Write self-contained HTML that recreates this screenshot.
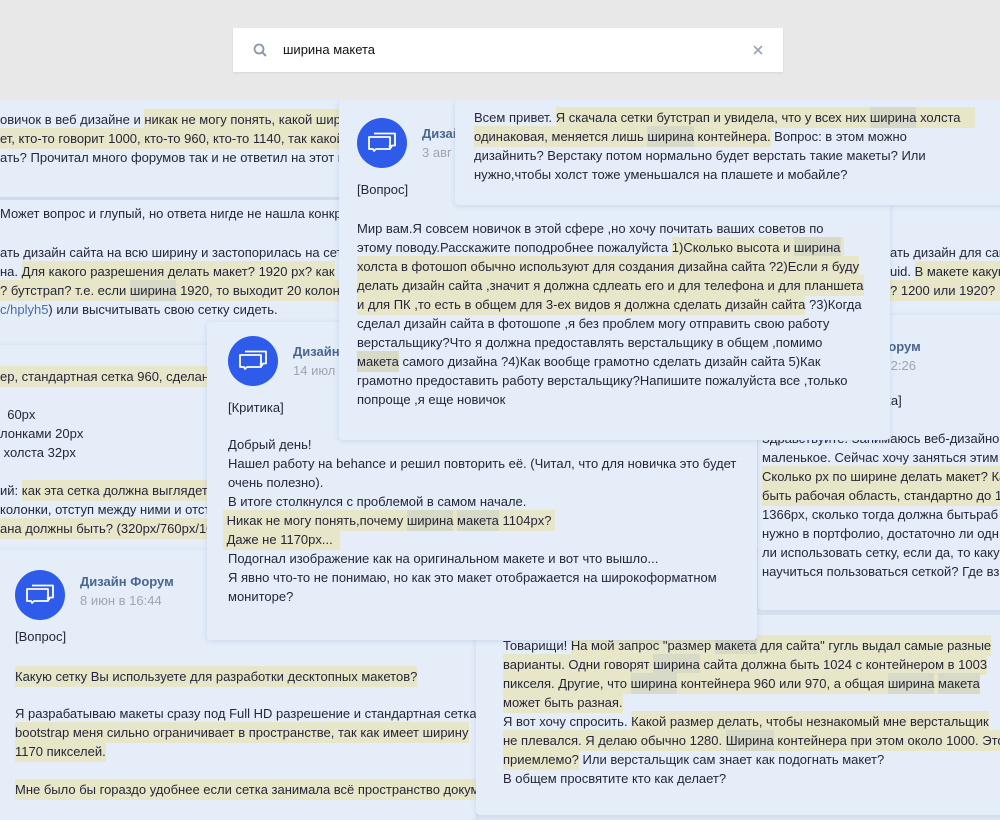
<!DOCTYPE html>
<html><head><meta charset="utf-8">
<style>
*{margin:0;padding:0;box-sizing:border-box}
body{width:1000px;height:801px;overflow:hidden;background:#e0e8f4;font-family:"Liberation Sans",sans-serif;font-size:13px;color:#26263a;position:relative}
.top{position:absolute;left:0;top:0;width:1000px;height:100px;background:#e8e8e8;z-index:50}
.search{position:absolute;left:233px;top:28px;width:550px;height:44px;background:#fff;box-shadow:0 1px 2px rgba(0,0,0,.08)}
.search .q{position:absolute;left:50px;top:14px;font-size:13px;color:#111}
.c{position:absolute;background:#e4edf8;border-radius:4px;box-shadow:0 1px 6px rgba(70,100,170,.16);overflow:hidden}
.l{position:absolute;white-space:nowrap;height:19px;line-height:19px}
.h{background:#e7e6c9;padding:3px 0}
.k{background:#d7dac6;padding:3px 0}
.a{position:absolute;width:50px;height:50px;border-radius:50%;background:#2f5bea}
.n{position:absolute;white-space:nowrap;color:#4a6690;font-weight:bold;font-size:13px}
.d{position:absolute;white-space:nowrap;color:#a0a6b0;font-size:13px}
.lk{color:#4a6fa5}
</style></head><body>
<svg width="0" height="0" style="position:absolute"><defs><symbol id="ic" viewBox="0 0 50 50"><path d="M12 19h21v12H19l-2 2-1-2h-4z" fill="none" stroke="#fff" stroke-width="1.8" stroke-linejoin="round"/><path d="M17 15.5h21v12h-3l-1 2-2-2" fill="none" stroke="#fff" stroke-width="1.8" stroke-linejoin="round"/></symbol></defs></svg>
<div class="top"><div class="search">
<svg style="position:absolute;left:20px;top:15px" width="14" height="14" viewBox="0 0 14 14"><circle cx="6" cy="6" r="4.5" fill="none" stroke="#8a96a8" stroke-width="1.8"/><line x1="9.3" y1="9.3" x2="13" y2="13" stroke="#8a96a8" stroke-width="2"/></svg>
<div class="q">ширина макета</div>
<svg style="position:absolute;left:520px;top:17px" width="10" height="10" viewBox="0 0 10 10"><path d="M1 1L9 9M9 1L1 9" stroke="#9aa4b2" stroke-width="1.6"/></svg>
</div></div>

<div class="c" style="left:-10px;top:100px;width:1010px;height:97px;z-index:1">
<div class="l" style="left:10px;top:10px">овичок в веб дизайне и <span class="h">никак не могу понять, какой ширины делать макет</span></div>
<div class="l" style="left:10px;top:29px"><span class="h">ет, кто-то говорит 1000, кто-то 960, кто-то 1140, так какой</span></div>
<div class="l" style="left:10px;top:48px">ать? Прочитал много форумов так и не ответил на этот вопрос</div>
</div>

<div class="c" style="left:-10px;top:200px;width:1010px;height:145px;z-index:2">
<div class="l" style="left:10px;top:4px"> Может вопрос и глупый, но ответа нигде не нашла конкретного</div>
<div class="l" style="left:10px;top:43px">ать дизайн сайта на всю ширину и застопорилась на сетке</div>
<div class="l" style="left:10px;top:62px">на. <span class="h">Для какого разрешения делать макет? 1920 px? как</span></div>
<div class="l" style="left:10px;top:81px"><span class="h">? бутстрап? т.е. если <span class="k">ширина</span> 1920, то выходит 20 колонок</span></div>
<div class="l" style="left:10px;top:100px"><span class="lk">c/hplyh5</span>) или высчитывать свою сетку сидеть.</div>
<div class="l" style="left:900px;top:43px">ать дизайн для сайта</div>
<div class="l" style="left:900px;top:62px">uid. <span class="h">В макете какую</span></div>
<div class="l" style="left:900px;top:81px"><span class="h">? 1200 или 1920?&nbsp;&nbsp;&nbsp;</span></div>
</div>

<div class="c" style="left:-10px;top:345px;width:800px;height:205px;z-index:3">
<div class="l" style="left:10px;top:22px"><span class="h">ер, стандартная сетка 960, сделана</span></div>
<div class="l" style="left:10px;top:60px">&nbsp; 60px</div>
<div class="l" style="left:10px;top:79px">лонками 20px</div>
<div class="l" style="left:10px;top:98px">&nbsp;холста 32px</div>
<div class="l" style="left:10px;top:136px">ий: <span class="h">как эта сетка должна выглядеть</span></div>
<div class="l" style="left:10px;top:155px">колонки, отступ между ними и отступ</div>
<div class="l" style="left:10px;top:174px"><span class="h">ана должны быть? (320px/760px/1024px)</span></div>
</div>

<div class="c" style="left:758px;top:315px;width:260px;height:295px;z-index:4">
<div class="a" style="left:4px;top:20px"><svg width="50" height="50"><use href="#ic"/></svg></div>
<div class="n" style="left:69px;top:24px">Дизайн Форум</div>
<div class="d" style="left:69px;top:43px">16 июн в 12:26</div>
<div class="l" style="left:88px;top:76px">[Критика]</div>
<div class="l" style="left:4px;top:114px">Здравствуйте. Занимаюсь веб-дизайном</div>
<div class="l" style="left:4px;top:133px">маленькое. Сейчас хочу заняться этим</div>
<div class="l" style="left:4px;top:152px"><span class="h">Сколько px по ширине делать макет? Ка</span></div>
<div class="l" style="left:4px;top:171px"><span class="h">быть рабочая область, стандартно до 1</span></div>
<div class="l" style="left:4px;top:190px">1366px, сколько тогда должна бытьраб</div>
<div class="l" style="left:4px;top:209px">нужно в портфолио, достаточно ли одн</div>
<div class="l" style="left:4px;top:228px">ли использовать сетку, если да, то каку</div>
<div class="l" style="left:4px;top:247px">научиться пользоваться сеткой? Где вз</div>
</div>

<div class="c" style="left:-10px;top:550px;width:486px;height:270px;z-index:5">
<div class="a" style="left:25px;top:20px"><svg width="50" height="50"><use href="#ic"/></svg></div>
<div class="n" style="left:90px;top:24px">Дизайн Форум</div>
<div class="d" style="left:90px;top:43px">8 июн в 16:44</div>
<div class="l" style="left:25px;top:77px">[Вопрос]</div>
<div class="l" style="left:25px;top:117px"><span class="h">Какую сетку Вы используете для разработки десктопных макетов?</span></div>
<div class="l" style="left:25px;top:154px">Я разрабатываю макеты сразу под Full HD разрешение и стандартная сетка</div>
<div class="l" style="left:25px;top:173px"><span class="h">bootstrap меня сильно ограничивает в пространстве, так как имеет ширину</span></div>
<div class="l" style="left:25px;top:192px"><span class="h">1170 пикселей. </span></div>
<div class="l" style="left:25px;top:230px"><span class="h">Мне было бы гораздо удобнее если сетка занимала всё пространство документа</span></div>
</div>

<div class="c" style="left:476px;top:615px;width:540px;height:200px;z-index:6">
<div class="l" style="left:27px;top:21px">Товарищи! <span class="h">На мой запрос "размер <span class="k">макета</span> для сайта" гугль выдал самые разные</span></div>
<div class="l" style="left:27px;top:40px"><span class="h">варианты. Одни говорят <span class="k">ширина</span> сайта должна быть 1024 с контейнером в 1003</span></div>
<div class="l" style="left:27px;top:59px"><span class="h">пикселя. Другие, что <span class="k">ширина</span> контейнера 960 или 970, а общая <span class="k">ширина</span> <span class="k">макета</span></span></div>
<div class="l" style="left:27px;top:78px"><span class="h">может быть разная.</span></div>
<div class="l" style="left:27px;top:97px">Я вот хочу спросить. <span class="h">Какой размер делать, чтобы незнакомый мне верстальщик</span></div>
<div class="l" style="left:27px;top:116px"><span class="h">не плевался. Я делаю обычно 1280. <span class="k">Ширина</span> контейнера при этом около 1000. Это</span></div>
<div class="l" style="left:27px;top:135px"><span class="h">приемлемо?</span> Или верстальщик сам знает как подогнать макет?</div>
<div class="l" style="left:27px;top:154px">В общем просвятите кто как делает?</div>
</div>

<div class="c" style="left:207px;top:322px;width:550px;height:318px;z-index:7">
<div class="a" style="left:21px;top:14px"><svg width="50" height="50"><use href="#ic"/></svg></div>
<div class="n" style="left:86px;top:22px">Дизайн Форум</div>
<div class="d" style="left:86px;top:41px">14 июл в 11:20</div>
<div class="l" style="left:21px;top:76px">[Критика]</div>
<div class="l" style="left:21px;top:113px">Добрый день!</div>
<div class="l" style="left:21px;top:132px">Нашел работу на behance и решил повторить её. (Читал, что для новичка это будет</div>
<div class="l" style="left:21px;top:151px">очень полезно).</div>
<div class="l" style="left:21px;top:170px">В итоге столкнулся с проблемой в самом начале.</div>
<div class="l" style="left:16px;top:189px"><span class="h">&nbsp;Никак не могу понять,почему <span class="k">ширина</span> <span class="k">макета</span> 1104px?&nbsp;</span></div>
<div class="l" style="left:16px;top:208px"><span class="h">&nbsp;Даже не 1170px...&nbsp;&nbsp;</span></div>
<div class="l" style="left:21px;top:227px">Подогнал изображение как на оригинальном макете и вот что вышло...</div>
<div class="l" style="left:21px;top:246px">Я явно что-то не понимаю, но как это макет отображается на широкоформатном</div>
<div class="l" style="left:21px;top:265px">мониторе?</div>
</div>

<div class="c" style="left:339px;top:100px;width:551px;height:340px;z-index:8">
<div class="a" style="left:18px;top:18px"><svg width="50" height="50"><use href="#ic"/></svg></div>
<div class="n" style="left:83px;top:26px">Дизайн Форум</div>
<div class="d" style="left:83px;top:45px">3 авг в 9:41</div>
<div class="l" style="left:18px;top:80px">[Вопрос]</div>
<div class="l" style="left:18px;top:119px">Мир вам.Я совсем новичок в этой сфере ,но хочу почитать ваших советов по</div>
<div class="l" style="left:18px;top:138px">этому поводу.Расскажите поподробнее пожалуйста <span class="h">1)Сколько высота и <span class="k">ширина</span>&nbsp;</span></div>
<div class="l" style="left:18px;top:157px"><span class="h">холста в фотошоп обычно используют для создания дизайна сайта ?2)Если я буду</span></div>
<div class="l" style="left:18px;top:176px"><span class="h">делать дизайн сайта ,значит я должна сдлеать его и для телефона и для планшета</span></div>
<div class="l" style="left:18px;top:195px"><span class="h">и для ПК ,то есть в общем для 3-ех видов я должна сделать дизайн сайта</span> ?3)Когда</div>
<div class="l" style="left:18px;top:214px">сделал дизайн сайта в фотошопе ,я без проблем могу отправить свою работу</div>
<div class="l" style="left:18px;top:233px">верстальщику?Что я должна предоставлять верстальщику в общем ,помимо</div>
<div class="l" style="left:18px;top:252px"><span class="k">макета</span> самого дизайна ?4)Как вообще грамотно сделать дизайн сайта 5)Как</div>
<div class="l" style="left:18px;top:271px">грамотно предоставить работу верстальщику?Напишите пожалуйста все ,только</div>
<div class="l" style="left:18px;top:290px">попроще ,я еще новичок</div>
</div>

<div class="c" style="left:455px;top:100px;width:560px;height:105px;z-index:9">
<div class="l" style="left:19px;top:8px">Всем привет. <span class="h">Я скачала сетки бутстрап и увидела, что у всех них <span class="k">ширина</span> холста&nbsp;&nbsp;&nbsp;&nbsp;</span></div>
<div class="l" style="left:19px;top:27px"><span class="h">одинаковая, меняется лишь <span class="k">ширина</span> контейнера.</span> Вопрос: в этом можно</div>
<div class="l" style="left:19px;top:46px">дизайнить? Верстаку потом нормально будет верстать такие макеты? Или</div>
<div class="l" style="left:19px;top:65px">нужно,чтобы холст тоже уменьшался на плашете и мобайле?</div>
</div>
</body></html>
